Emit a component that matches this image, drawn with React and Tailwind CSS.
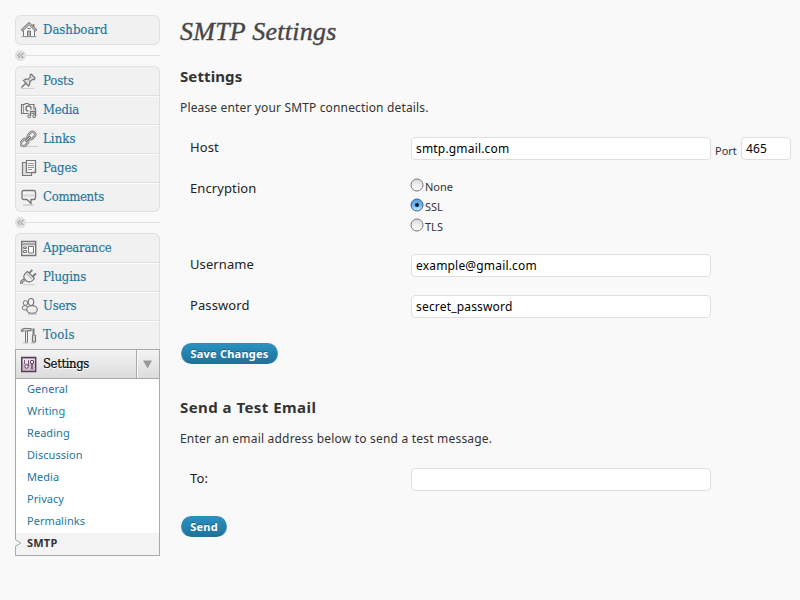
import React from 'react';

const Icon = ({ children }) => (
  <svg width="18" height="18" viewBox="0 0 18 18" fill="none" stroke="#777" strokeWidth="1" className="block shrink-0">
    {children}
  </svg>
);

const icons = {
  dashboard: (
    <Icon>
      <path d="M3.500 9v6.500h11V9" fill="#f6f6f6" />
      <path d="M1.500 9.800 9 2.500l7.500 7.300" strokeWidth="2.600" stroke="#808080" />
      <path d="M2 9.400 9 2.700l7 6.700" stroke="#ddd" strokeWidth=".9" />
      <path d="M13.500 6V3" strokeWidth="1.600" />
      <path d="M7.500 15.500V10h3v5.500M9 10v5.500" />
      <path d="M7.500 7.500h3" />
      <path d="M1.500 15.700h15" stroke="#999" />
    </Icon>
  ),
  posts: (
    <Icon>
      <path d="M1 16.500h13" stroke="#ccc" />
      <path d="M1.500 15.500 6 11" strokeWidth="1.500" />
      <path d="m3.500 8.500 2.500-1.500 2 .3 2.500-2.500-.5-2 1.500-.5L15 6l-.5 1.500-2-.2L9.700 10l.2 2-1.500 2Z" fill="#ddd" strokeWidth="1.200" />
      <path d="m8 7.300 2.200 2.200" stroke="#999" />
    </Icon>
  ),
  media: (
    <Icon>
      <path d="M1.500 3.500h3l1-1h2.500l1 1h5v9h-12.500Z" fill="#eee" strokeWidth="1.200" />
      <path d="M3.500 4v8" stroke="#999" />
      <circle cx="8.500" cy="7.500" r="2.500" fill="#fff" strokeWidth="1.400" />
      <path d="M10 14v-4h6.500V14" stroke="#f1f1f1" strokeWidth="3" />
      <path d="M10.500 15v-4.500h5V15" strokeWidth="1.400" />
      <path d="M15.500 6.500v4" strokeWidth="1.200" />
      <circle cx="9.200" cy="15.200" r="1.500" fill="#ddd" />
      <circle cx="14.200" cy="15.200" r="1.500" fill="#ddd" />
    </Icon>
  ),
  links: (
    <Icon>
      <path d="M4 16.500h14" stroke="#ccc" />
      <g transform="rotate(-45 8 9)">
        <rect x="-1" y="6.300" width="8" height="5.400" rx="2.700" strokeWidth="2.400" />
        <rect x="9" y="6.300" width="8" height="5.400" rx="2.700" strokeWidth="2.400" />
        <rect x="-1" y="6.300" width="8" height="5.400" rx="2.700" stroke="#ddd" strokeWidth=".9" />
        <rect x="9" y="6.300" width="8" height="5.400" rx="2.700" stroke="#ddd" strokeWidth=".9" />
        <path d="M4.500 9h7" strokeWidth="2.600" />
        <path d="M5 9h6" stroke="#ddd" strokeWidth=".9" />
      </g>
    </Icon>
  ),
  pages: (
    <Icon>
      <path d="M2.500 3.500h4v9h5v4h-9Z" fill="#ddd" strokeWidth="1.200" />
      <path d="M6.500 1.500h9v12h-9Z" fill="#f5f5f5" strokeWidth="1.200" />
      <path d="M8 4.500h6M8 6.500h6M8 8.500h6M8 10.500h4" stroke="#999" />
      <path d="M12 13.500h3.500V10" strokeWidth="1.300" />
    </Icon>
  ),
  comments: (
    <Icon>
      <path d="M4 2.500h9.500q2 0 2 2v5q0 2-2 2h-2.500v4l-4-4h-3q-2 0-2-2v-5q0-2 2-2Z" fill="#f3f3f3" strokeWidth="1.300" />
      <path d="M3.500 6h10.500v3h-10.500Z" fill="#ddd" stroke="none" />
      <path d="M3 17h11" stroke="#bbb" />
    </Icon>
  ),
  appearance: (
    <Icon>
      <path d="M1.700 2.500h14v14h-14Z" fill="#f6f6f6" strokeWidth="1.400" />
      <path d="M2 4.500h13" stroke="#aaa" />
      <path d="M2 5.800h13" stroke="#888" />
      <path d="M8.500 7.500h5v6.500h-5Z" fill="#fff" />
      <path d="M3.500 8h3v1.500h-3ZM3.500 11.500h3v2h-3Z" />
    </Icon>
  ),
  plugins: (
    <Icon>
      <path d="M3 16.700h12" stroke="#ccc" />
      <path d="M1.200 16q0-3.500 3.500-4" strokeWidth="2.800" />
      <path d="M1.200 15.800q0-3.200 3.500-4" strokeWidth=".8" stroke="#ddd" />
      <path d="m9.500 5 2.800-3.200M12.700 8.500 16 5.500" strokeWidth="1.800" />
      <path d="m7.500 3.500 7 7q-3.500 4.500-7.500 3l-3-3q-1-4 3.500-7Z" fill="#eee" strokeWidth="1.200" />
      <path d="m6.800 6 5 5" stroke="#999" />
    </Icon>
  ),
  users: (
    <Icon>
      <ellipse cx="5" cy="10.800" rx="2.800" ry="2.200" fill="#eee" />
      <circle cx="5.500" cy="6" r="2.300" fill="#f3f3f3" />
      <ellipse cx="11" cy="5" rx="2.700" ry="3.500" fill="#f3f3f3" strokeWidth="1.200" />
      <ellipse cx="12" cy="12.500" rx="5.300" ry="3.800" fill="#eee" strokeWidth="1.200" />
      <path d="M8 17h9" stroke="#aaa" />
    </Icon>
  ),
  tools: (
    <Icon>
      <path d="M1.500 5.500V4q2-2 5-1.500h4.500v2.200h-4M1.500 5.500 4.500 4.700" fill="#ddd" strokeWidth="1.200" />
      <path d="M5.500 5v11.500h2V5Z" fill="#eee" />
      <path d="M13.500 2.500v6" strokeWidth="2" />
      <path d="M12.500 9.500q1-1.500 3 0v6q-1.500 1.800-3 0Z" fill="#ddd" strokeWidth="1.200" />
      <path d="M3 17h5M10.500 17h5" stroke="#bbb" />
    </Icon>
  ),
  settings: (
    <Icon>
      <path d="M1.700 2.500h14v14h-14Z" fill="#cdbbca" stroke="#5c3a5a" strokeWidth="1.400" />
      <path d="M3 4h11.500v4H3Z" fill="#eee4ec" stroke="none" />
      <path d="M4.500 5v4M8.500 5v6" stroke="#7c5a79" strokeWidth="1" />
      <circle cx="6.500" cy="11.500" r="1.700" fill="#f8f4f8" stroke="#5c3a5a" />
      <circle cx="12" cy="7" r="1.700" fill="#f8f4f8" stroke="#5c3a5a" />
      <path d="M12 9v5.500" stroke="#5c3a5a" strokeWidth="1.300" />
    </Icon>
  ),
};

const MenuItem = ({ icon, label, first, track = 'tracking-[-0.1px]' }) => (
  <a className={`flex h-[29px] items-center border-t border-[#e0e0e0] pl-[4px] ${first ? 'rounded-t-[6px]' : 'shadow-[inset_0_1px_0_#fcfcfc]'}`}>
    {icons[icon]}
    <span className={`ml-[5px] font-['DejaVu_Serif_Condensed','DejaVu_Serif',serif] text-[13px] leading-[18px] text-[#21759b] [-webkit-text-stroke:0.15px_#21759b] ${track}`}>{label}</span>
  </a>
);

const Separator = () => (
  <div className="flex h-[21px] items-center">
    <span className="flex size-[11px] items-center justify-center rounded-full bg-[#e1e1e1]">
      <svg width="7" height="7" viewBox="0 0 7 7" fill="none" stroke="#888" strokeWidth="1">
        <path d="M3.300 1 1 3.500l2.300 2.500M6.300 1 4 3.500l2.300 2.500" />
      </svg>
    </span>
    <span className="h-px flex-1 bg-[#e1e1e1]" />
  </div>
);

const submenu = ['General', 'Writing', 'Reading', 'Discussion', 'Media', 'Privacy', 'Permalinks'];

const Sidebar = () => (
  <nav className="flex w-[145px] shrink-0 flex-col pt-[15px]">
    <div className="h-[30px] rounded-[6px] border-x border-b border-[#e0e0e0] bg-[#f1f1f1]">
      <MenuItem icon="dashboard" label="Dashboard" first track="tracking-normal" />
    </div>
    <Separator />
    <div className="rounded-[6px] border-x border-b border-[#e0e0e0] bg-[#f1f1f1]">
      <MenuItem icon="posts" label="Posts" first />
      <MenuItem icon="media" label="Media" track="tracking-[-0.2px]" />
      <MenuItem icon="links" label="Links" track="tracking-[0.1px]" />
      <MenuItem icon="pages" label="Pages" />
      <MenuItem icon="comments" label="Comments" track="tracking-[-0.3px]" />
    </div>
    <Separator />
    <div className="rounded-t-[6px] border-x border-[#e0e0e0] bg-[#f1f1f1]">
      <MenuItem icon="appearance" label="Appearance" first track="tracking-[-0.25px]" />
      <MenuItem icon="plugins" label="Plugins" />
      <MenuItem icon="users" label="Users" track="tracking-[-0.2px]" />
      <MenuItem icon="tools" label="Tools" track="tracking-[0.2px]" />
    </div>
    <div className="border border-[#aaa] bg-white">
      <div className="flex h-[29px] border-b border-[#aaa] bg-gradient-to-b from-[#f3f3f3] to-[#dcdcdc]">
        <div className="flex flex-1 items-center pl-[4px]">
          {icons.settings}
          <span className="ml-[5px] font-['DejaVu_Serif_Condensed','DejaVu_Serif',serif] text-[13px] leading-[18px] tracking-[-0.4px] text-black [-webkit-text-stroke:0.15px_#000] [text-shadow:0_1px_0_#fff]">Settings</span>
        </div>
        <div className="flex w-[23px] items-center justify-center border-l border-[#aaa] pr-[2px] pt-px shadow-[inset_1px_0_0_#f8f8f8]">
          <svg width="9" height="9" viewBox="0 0 9 9"><path d="M0 .5h9L4.500 8.500Z" fill="#999" /></svg>
        </div>
      </div>
      <ul className="font-['Noto_Sans',sans-serif] text-[11px] text-[#21759b]">
        {submenu.map((s) => (
          <li key={s} className="flex h-[22px] items-center pb-[2px] pl-[11px] tracking-[0.05px]">{s}</li>
        ))}
        <li className="relative flex h-[22px] items-center bg-[#f3f3f3] pb-[2px] pl-[11px] font-bold tracking-[0.2px] text-[#333]">
          <svg width="8" height="8" viewBox="0 0 8 8" className="absolute -left-px top-[6px]">
            <path d="M0 0v8l6-4Z" fill="#f9f9f9" />
            <path d="m0 .5 6 3.500-6 3.500" fill="none" stroke="#aaa" />
          </svg>
          SMTP
        </li>
      </ul>
    </div>
  </nav>
);

const Field = ({ value, width = 'w-[300px]' }) => (
  <input
    defaultValue={value}
    className={`block h-[23px] ${width} rounded-[4px] border border-[#dfdfdf] bg-white px-[4px] font-['Noto_Sans',sans-serif] text-[12px] tracking-[0.18px] text-black outline-none`}
  />
);

const Row = ({ label, children }) => (
  <div className="flex h-[23px] items-center">
    <label className="w-[231px] pb-[2px] pl-[10px] text-[13px] tracking-[0.1px] text-[#222]">{label}</label>
    {children}
  </div>
);

const Radio = ({ label, checked }) => (
  <div className="flex h-[20px] items-center">
    <svg width="14" height="14" viewBox="0 0 14 14" className="mb-px shrink-0">
      <defs>
        <linearGradient id="radioOff" x2="0" y2="1">
          <stop offset="0" stopColor="#d8d8d8" />
          <stop offset=".5" stopColor="#efefef" />
          <stop offset="1" stopColor="#fff" />
        </linearGradient>
        <linearGradient id="radioOn" x2="0" y2="1">
          <stop offset="0" stopColor="#5f9fe0" />
          <stop offset=".5" stopColor="#6db4ee" />
          <stop offset="1" stopColor="#c8f4ff" />
        </linearGradient>
      </defs>
      <circle cx="7" cy="7" r="6" fill={checked ? 'url(#radioOn)' : 'url(#radioOff)'} stroke={checked ? '#345f9c' : '#777'} />
      {checked && <circle cx="7" cy="7" r="2" fill="#10243c" />}
    </svg>
    <span className="ml-px pt-[4px] text-[11px] text-[#333]">{label}</span>
  </div>
);

const Button = ({ children, className }) => (
  <button className={`ml-px flex h-[21px] items-center justify-center rounded-full border border-[#298cba] border-b-[#21759b] bg-gradient-to-b from-[#2a91c0] to-[#21719a] pt-[2px] text-[11px] font-bold tracking-[0.22px] text-white [text-shadow:0_-1px_0_rgba(0,0,0,0.3)] ${className}`}>
    {children}
  </button>
);

export default function App() {
  return (
    <div className="flex h-[600px] w-[800px] overflow-hidden bg-[#f9f9f9] pl-[15px]">
      <Sidebar />
      <main className="ml-[20px] flex flex-1 flex-col pt-[14px] font-['Noto_Sans',sans-serif] text-[#333]">
        <h1 className="h-[35px] whitespace-nowrap font-['Liberation_Serif',serif] text-[26px] italic leading-[35px] tracking-[0.25px] text-[#464646] [-webkit-text-stroke:0.4px_#464646]">SMTP Settings</h1>
        <h2 className="mt-[17px] h-[20px] text-[15px] font-bold leading-[20px] tracking-[0.1px]">Settings</h2>
        <p className="mt-[13px] h-[18px] text-[12px] leading-[18px] tracking-[0.15px]">Please enter your SMTP connection details.</p>
        <div className="mt-[20px] flex flex-col">
          <Row label="Host">
            <Field value="smtp.gmail.com" />
            <span className="w-[30px] pl-[4px] pt-[6px] text-[11px]">Port</span>
            <Field value="465" width="w-[50px]" />
          </Row>
          <div className="mt-[15px] flex h-[60px]">
            <span className="w-[230px] pl-[10px] pt-[4px] text-[13px] tracking-[0.1px] text-[#222]">Encryption</span>
            <div>
              <Radio label="None" />
              <Radio label="SSL" checked />
              <Radio label="TLS" />
            </div>
          </div>
          <div className="mt-[19px]"><Row label="Username"><Field value="example@gmail.com" /></Row></div>
          <div className="mt-[18px]"><Row label="Password"><Field value="secret_password" /></Row></div>
        </div>
        <Button className="mt-[25px] w-[97px]">Save Changes</Button>
        <h2 className="mt-[33px] h-[20px] text-[15px] font-bold leading-[20px] tracking-[0.45px]">Send a Test Email</h2>
        <p className="mt-[13px] h-[18px] text-[12px] leading-[18px] tracking-[0.2px]">Enter an email address below to send a test message.</p>
        <div className="mt-[20px]"><Row label="To:"><Field value="" /></Row></div>
        <Button className="mt-[25px] w-[46px]">Send</Button>
      </main>
    </div>
  );
}
